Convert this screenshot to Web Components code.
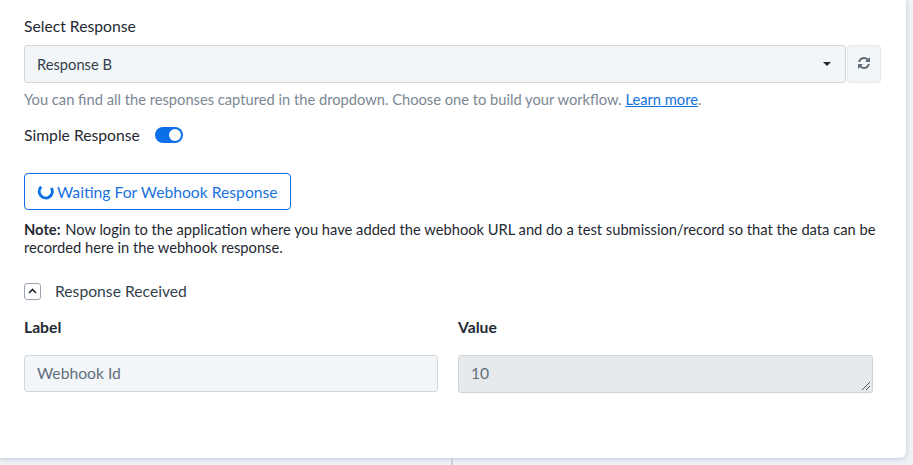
<!DOCTYPE html>
<html>
<head>
<meta charset="utf-8">
<title>Webhook Response</title>
<style>
  html, body { margin: 0; height: 100%; overflow: hidden; }
  body { background: #eef1f6; font-family: Lato, "Open Sans", sans-serif; color: #1f2933; }
  note-text div { white-space: nowrap; }
  note-text b { margin-right: 1px; }
</style>
</head>
<body>
<webhook-panel>
  <response-select label="Select Response" value="Response B">
    You can find all the responses captured in the dropdown. Choose one to build your workflow. <a href="#">Learn more</a>.
  </response-select>
  <toggle-row label="Simple Response"></toggle-row>
  <wait-button>Waiting For Webhook Response</wait-button>
  <note-text>
    <div><b>Note:</b> Now login to the application where you have added the webhook URL and do a test submission/record so that the data can be</div>
    <div>recorded here in the webhook response.</div>
  </note-text>
  <collapse-head>Response Received</collapse-head>
  <field-grid></field-grid>
</webhook-panel>

<script>
class WebhookPanel extends HTMLElement {
  constructor() {
    super();
    const shadow = this.attachShadow({ mode: 'open' });
    shadow.innerHTML = `
      <style>
        :host { display: block; height: 465px; position: relative; overflow: hidden; }
        .card {
          box-sizing: border-box;
          width: 906px;
          height: 458px;
          padding: 17px 33px 0 24px;
          background: #fff;
          border-radius: 0 0 6px 0;
          box-shadow: 0 1px 4px rgb(150 165 185 / 55%);
        }
        .divider { position: absolute; left: 451px; top: 458px; width: 2px; height: 7px; background: #c9ced6; }
      </style>
      <div class="card"><slot></slot></div>
      <div class="divider"></div>
    `;
  }
}

class ResponseSelect extends HTMLElement {
  constructor() {
    super();
    const shadow = this.attachShadow({ mode: 'open' });
    shadow.innerHTML = `
      <style>
        :host { display: block; font-size: 15.7px; }
        label { display: block; line-height: 18px; margin-bottom: 10px; color: #1f2933; }
        .row { display: flex; gap: 1px; height: 38px; margin-right: -8px; }
        .select, .refresh {
          box-sizing: border-box;
          display: flex;
          align-items: center;
          background: #f3f6f9;
          border: 1px solid #d3d6da;
          border-radius: 3px;
        }
        .select { flex: 1; padding: 0 12px; font-size: 14.7px; color: #323f4b; justify-content: space-between; }
        .caret { width: 0; height: 0; border: 4px solid transparent; border-top-color: #1f2933; border-bottom: 0; margin-right: 2px; }
        .refresh { width: 34px; justify-content: center; border-color: #e6e9ed; color: #5f6b76; padding: 0 1px 2px 0; }
        .help { margin-top: 7px; font-size: 14.7px; line-height: 18px; color: #7b8794; white-space: nowrap; }
        ::slotted(a) { color: #1273de; }
      </style>
      <label></label>
      <div class="row">
        <div class="select"><span class="value"></span><span class="caret"></span></div>
        <div class="refresh">
          <svg width="12" height="12" viewBox="0 0 1536 1536" fill="currentColor"><path d="M1511 928q0 5-1 7-64 268-268 434.500T764 1536q-146 0-282.500-55T238 1324l-129 129q-19 19-45 19t-45-19-19-45V960q0-26 19-45t45-19h448q26 0 45 19t19 45-19 45l-137 137q71 66 161 102t187 36q134 0 250-65t186-179q11-17 53-117 8-23 30-23h192q13 0 22.500 9.500t9.500 22.500zm25-800v448q0 26-19 45t-45 19h-448q-26 0-45-19t-19-45 19-45l138-138Q969 256 768 256q-134 0-250 65T332 500q-11 17-53 117-8 23-30 23H50q-13 0-22.500-9.500T18 608v-7q65-268 270-434.500T768 0q146 0 284 55.500T1297 212l130-129q19-19 45-19t45 19 19 45z"/></svg>
        </div>
      </div>
      <div class="help"><slot></slot></div>
    `;
    shadow.querySelector('label').textContent = this.getAttribute('label');
    shadow.querySelector('.value').textContent = this.getAttribute('value');
  }
}

class ToggleRow extends HTMLElement {
  constructor() {
    super();
    const shadow = this.attachShadow({ mode: 'open' });
    shadow.innerHTML = `
      <style>
        :host { display: flex; align-items: center; gap: 15px; margin-top: 18px; height: 18px; font-size: 15.7px; color: #1f2933; }
        .switch { position: relative; width: 28px; height: 16px; border-radius: 8px; background: #0b6fe8; }
        .switch::after { content: ""; position: absolute; right: 2px; top: 2px; width: 12px; height: 12px; border-radius: 50%; background: #fff; }
      </style>
      <span class="text"></span>
      <span class="switch"></span>
    `;
    shadow.querySelector('.text').textContent = this.getAttribute('label');
  }
}

class WaitButton extends HTMLElement {
  constructor() {
    super();
    const shadow = this.attachShadow({ mode: 'open' });
    shadow.innerHTML = `
      <style>
        :host { display: block; margin-top: 29px; }
        button {
          box-sizing: border-box;
          display: flex;
          align-items: center;
          gap: 3px;
          width: 267px;
          height: 37px;
          padding: 0 12px;
          background: #fff;
          border: 1px solid #0b6fe8;
          border-radius: 4px;
          color: #1a73e0;
          font: 15.7px Lato, "Open Sans", sans-serif;
        }
        svg { flex: none; }
      </style>
      <button>
        <svg width="17" height="17" viewBox="0 0 17 17" fill="none"><path d="M4.200 3.800A6.500 6.500 0 1 0 14.300 5" stroke="#0b6fe8" stroke-width="3"/></svg>
        <slot></slot>
      </button>
    `;
  }
}

class NoteText extends HTMLElement {
  constructor() {
    super();
    const shadow = this.attachShadow({ mode: 'open' });
    shadow.innerHTML = `
      <style>
        :host { display: block; margin: 10px -8px 0 0; font-size: 14.7px; line-height: 18px; color: #1f2933; }
      </style>
      <slot></slot>
    `;
  }
}

class CollapseHead extends HTMLElement {
  constructor() {
    super();
    const shadow = this.attachShadow({ mode: 'open' });
    shadow.innerHTML = `
      <style>
        :host { display: flex; align-items: center; gap: 14px; margin-top: 26px; height: 18px; font-size: 15.7px; color: #323f4b; }
        .box {
          box-sizing: border-box;
          display: flex;
          align-items: center;
          justify-content: center;
          width: 17px;
          height: 17px;
          border: 1px solid #9aa5b1;
          border-radius: 3px;
        }
      </style>
      <span class="box">
        <svg width="9" height="6" viewBox="0 0 9 6" fill="none"><path d="M1 5l3.500-3.500L8 5" stroke="#1f2933" stroke-width="1.600"/></svg>
      </span>
      <slot></slot>
    `;
  }
}

class FieldGrid extends HTMLElement {
  constructor() {
    super();
    const shadow = this.attachShadow({ mode: 'open' });
    shadow.innerHTML = `
      <style>
        :host { display: grid; grid-template-columns: 414px 415px; column-gap: 20px; margin-top: 18px; }
        .head { font-size: 15.7px; font-weight: 700; line-height: 18px; color: #1f2933; margin-bottom: 19px; }
        .input {
          box-sizing: border-box;
          display: flex;
          align-items: center;
          height: 37px;
          padding: 0 12px 2px;
          background: #f3f6f9;
          border: 1px solid #d3d6da;
          border-radius: 3px;
          font-size: 15.7px;
          color: #616e7c;
        }
        .value { position: relative; background: #e7eaed; height: 38px; border-color: #cfd2d6; }
        .grip { position: absolute; right: 1px; bottom: 1px; }
      </style>
      <div>
        <div class="head">Label</div>
        <div class="input">Webhook Id</div>
      </div>
      <div>
        <div class="head">Value</div>
        <div class="input value">10
          <svg class="grip" width="10" height="10" viewBox="0 0 10 10" fill="none"><path d="M1 9l8-8M5 9l4-4" stroke="#555" stroke-width="1"/></svg>
        </div>
      </div>
    `;
  }
}

customElements.define('webhook-panel', WebhookPanel);
customElements.define('response-select', ResponseSelect);
customElements.define('toggle-row', ToggleRow);
customElements.define('wait-button', WaitButton);
customElements.define('note-text', NoteText);
customElements.define('collapse-head', CollapseHead);
customElements.define('field-grid', FieldGrid);
</script>
</body>
</html>
